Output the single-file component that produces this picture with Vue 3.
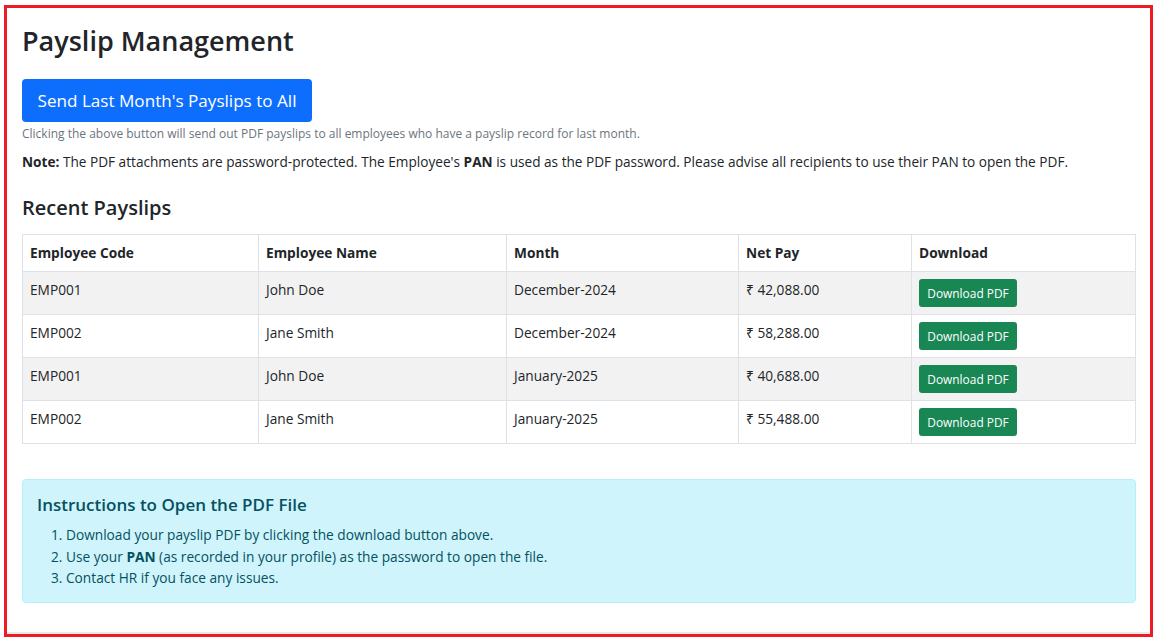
<template>
  <div class="frame">
    <div class="page">
      <h1>Payslip Management</h1>
      <button class="send-btn" type="button">Send Last Month's Payslips to All</button>
      <p class="hint">Clicking the above button will send out PDF payslips to all employees who have a payslip record for last month.</p>
      <p class="note">
        <strong>Note:</strong> The PDF attachments are password-protected. The Employee's <strong>PAN</strong> is used as the PDF password. Please advise all recipients to use their PAN to open the PDF.
      </p>
      <h2>Recent Payslips</h2>
      <table>
        <thead>
          <tr>
            <th class="c1">Employee Code</th>
            <th class="c2">Employee Name</th>
            <th class="c3">Month</th>
            <th class="c4">Net Pay</th>
            <th>Download</th>
          </tr>
        </thead>
        <tbody>
          <tr v-for="(row, i) in payslips" :key="i">
            <td>{{ row.code }}</td>
            <td>{{ row.name }}</td>
            <td>{{ row.month }}</td>
            <td>₹ {{ row.pay }}</td>
            <td><button class="dl-btn" type="button">Download PDF</button></td>
          </tr>
        </tbody>
      </table>
      <div class="info">
        <h3>Instructions to Open the PDF File</h3>
        <ol>
          <li>Download your payslip PDF by clicking the download button above.</li>
          <li>Use your <strong>PAN</strong> (as recorded in your profile) as the password to open the file.</li>
          <li>Contact HR if you face any issues.</li>
        </ol>
      </div>
    </div>
  </div>
</template>

<script setup>
const payslips = [
  { code: "EMP001", name: "John Doe", month: "December-2024", pay: "42,088.00" },
  { code: "EMP002", name: "Jane Smith", month: "December-2024", pay: "58,288.00" },
  { code: "EMP001", name: "John Doe", month: "January-2025", pay: "40,688.00" },
  { code: "EMP002", name: "Jane Smith", month: "January-2025", pay: "55,488.00" },
];
</script>

<style>
body {
  background: #fff;
  overflow: hidden;
}
</style>

<style scoped>
.frame {
  box-sizing: border-box;
  width: 1149px;
  height: 632px;
  margin: 5px 0 0 4px;
  border: 3px solid #ed1c24;
  font-family: "Open Sans", "Noto Sans", sans-serif;
  color: #212529;
}

.page {
  box-sizing: border-box;
  height: 100%;
  padding: 15px 0 0 15px;
  border-bottom: 2px solid #e8e8e8;
}

h1 {
  margin: 0 0 20px;
  font-size: 27px;
  line-height: 36px;
  font-weight: 600;
}

.send-btn {
  display: block;
  height: 43px;
  width: 290px;
  padding: 0;
  border: 0;
  border-radius: 4px;
  background: #0d6efd;
  color: #fff;
  font: inherit;
  font-size: 17.1px;
}

.hint {
  margin: 3px 0 0;
  font-size: 12px;
  line-height: 18px;
  color: #6c757d;
}

.note {
  margin: 8px 0 0;
  font-size: 13.63px;
  line-height: 21px;
}

h2 {
  margin: 22px 0 13px;
  font-size: 20px;
  line-height: 27px;
  font-weight: 600;
}

table {
  width: 1114px;
  border-collapse: collapse;
  table-layout: fixed;
  font-size: 13.7px;
}

th,
td {
  box-sizing: border-box;
  border: 1px solid #dee2e6;
  padding: 0 7px;
  text-align: left;
}

th {
  height: 37px;
  padding-bottom: 2px;
  font-weight: 700;
}

td {
  height: 43px;
  padding-top: 7px;
  padding-bottom: 0;
  line-height: 21px;
  vertical-align: top;
}

tbody tr:nth-child(odd) td {
  background: #f2f2f2;
}

.c1 { width: 236px; }
.c2 { width: 248px; }
.c3 { width: 232px; }
.c4 { width: 173px; }

.dl-btn {
  display: block;
  width: 98px;
  height: 28px;
  padding: 0;
  border: 0;
  border-radius: 3px;
  background: #198754;
  color: #fff;
  font: inherit;
  font-size: 11.9px;
}

.info {
  box-sizing: border-box;
  width: 1114px;
  height: 124px;
  margin-top: 35px;
  padding: 14px 14px 0;
  border: 1px solid #b6effb;
  border-radius: 4px;
  background: #cff4fc;
  color: #055160;
}

h3 {
  margin: 0 0 8px;
  font-size: 17px;
  line-height: 22px;
  font-weight: 600;
}

ol {
  margin: 0;
  padding-left: 29px;
  font-size: 13.7px;
  line-height: 21.5px;
}
</style>
